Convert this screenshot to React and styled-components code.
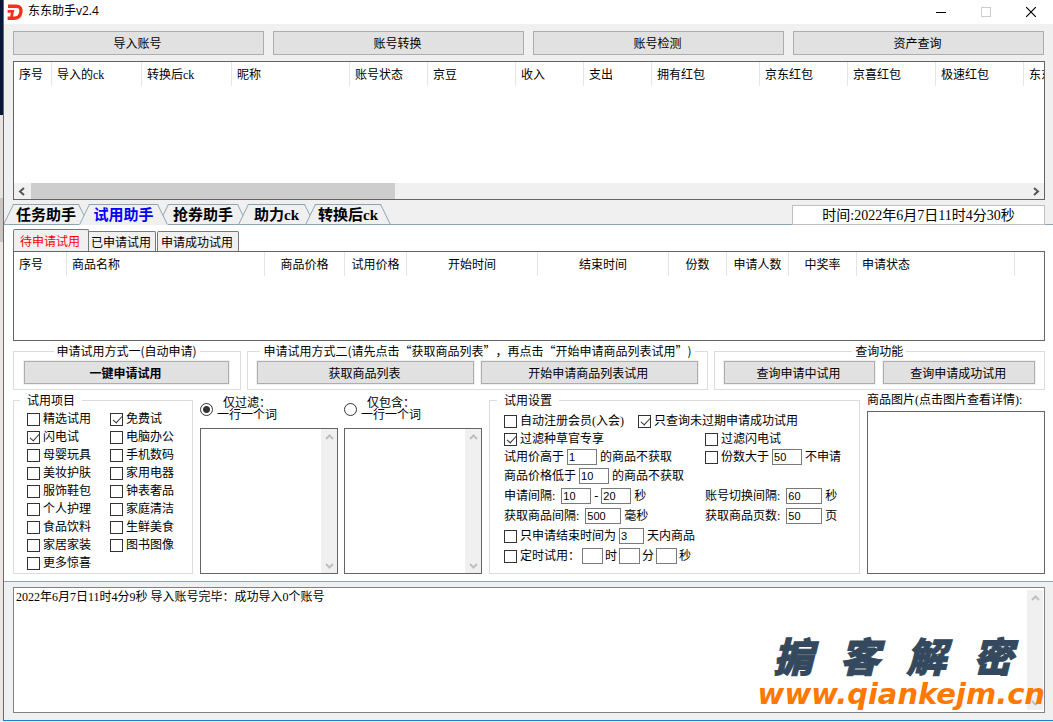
import React, { useState } from 'react';
import styled, { createGlobalStyle } from 'styled-components';

const GlobalStyle = createGlobalStyle`
  * {
    box-sizing: border-box;
  }
  body {
    margin: 0;
    background: #e6e6e6;
    color: #000;
    font-family: "Liberation Serif", "Noto Sans CJK SC", sans-serif;
    font-size: 12px;
    line-height: 14px;
    text-spacing-trim: space-all;
  }
  button, input, textarea {
    font: inherit;
    color: inherit;
    margin: 0;
  }
`;

const Desktop = styled.div`
  height: 100vh;
  min-height: 700px;
  padding: 0 0 1px 3px;
  background: linear-gradient(#04193a 0 115px, #e4e4e4 115px 198px, #c6c6c6 198px 242px, #e8e8e8 242px);
`;

const Window = styled.div`
  height: 100%;
  display: flex;
  flex-direction: column;
  background: #f0f0f0;
  border-left: 1px solid #1a7fd0;
  border-bottom: 1px solid #1a7fd0;
  overflow: hidden;
  white-space: nowrap;
`;

const TitleBar = styled.header`
  display: flex;
  align-items: center;
  height: 24px;
  padding-left: 3px;
  background: #fff;
`;

const Title = styled.h1`
  flex: 1;
  margin: 0 0 2px 4px;
  font-family: "Open Sans", "Noto Sans CJK SC", sans-serif;
  font-size: 12px;
  font-weight: 400;
`;

const WindowButton = styled.button`
  display: flex;
  align-items: center;
  justify-content: center;
  width: 45px;
  height: 22px;
  padding: 0;
  border: none;
  background: none;
`;

const Button = styled.button`
  flex: 1;
  height: ${props => (props.$small ? 23 : 24)}px;
  padding: 2px 2px 0 0;
  border: 1px solid #adadad;
  background: #e1e1e1;
  font-weight: ${props => (props.$bold ? 700 : 400)};
  box-shadow: ${props => (props.$small ? '0 0 0 1px #f0f0f0' : 'none')};
`;

const ButtonBar = styled.div`
  display: flex;
  gap: 9px;
  padding: 7px 9px 6px;
`;

const TableBox = styled.div`
  display: flex;
  flex-direction: column;
  justify-content: space-between;
  height: ${props => props.$height}px;
  margin: 0 8px 0 9px;
  border: 1px solid #646464;
  background: #fff;
  overflow: hidden;
`;

const Table = styled.table`
  table-layout: fixed;
  width: 0;
  border-collapse: separate;
  border-spacing: 0;
`;

const Th = styled.th`
  width: ${props => props.$width}px;
  height: 24px;
  padding: 2px 0 0 ${props => (props.$align === 'center' ? 0 : 5)}px;
  border-right: 1px solid #e5e5e5;
  text-align: ${props => props.$align || 'left'};
  font-weight: 400;
`;

const HScroll = styled.div`
  display: flex;
  align-items: center;
  height: 16px;
  background: #f0f0f0;
`;

const ScrollThumb = styled.div`
  width: 364px;
  height: 16px;
  margin-right: auto;
  background: #cdcdcd;
`;

const ScrollArrow = styled.span`
  display: flex;
  align-items: center;
  justify-content: center;
  width: 17px;
  height: 16px;
`;

const TabBar = styled.div`
  display: flex;
  align-items: flex-end;
  height: 25px;
  padding-left: 4px;
  border-bottom: 1px solid #8ca5b5;
`;

const Tab = styled.button`
  position: relative;
  z-index: ${props => (props.$active ? 2 : 1)};
  width: ${props => props.$width}px;
  height: 21px;
  margin-bottom: -1px;
  padding: 0;
  border: none;
  background: none;
  color: ${props => (props.$active ? '#0000ff' : '#000')};
  font-size: 15px;
  font-weight: 700;
  line-height: 20px;
  &::before,
  &::after {
    content: '';
    position: absolute;
    z-index: -1;
    top: 0;
    bottom: 0;
    width: 60%;
    background: #f0f0f0;
    border-top: 1px solid #8ca5b5;
    border-bottom: 1px solid ${props => (props.$active ? '#f0f0f0' : '#8ca5b5')};
  }
  &::before {
    left: 0;
    border-left: 1px solid #8ca5b5;
    transform: skewX(-26deg);
  }
  &::after {
    right: 0;
    border-right: 1px solid #8ca5b5;
    transform: skewX(26deg);
  }
`;

const Clock = styled.div`
  width: 253px;
  height: 20px;
  margin: 0 8px -1px auto;
  border: 1px solid #c0c0c0;
  background: #fff;
  font-size: 14px;
  line-height: 19px;
  text-align: center;
`;

const Panel = styled.main`
  padding: 4px 8px 7px 9px;
  background: #fff;
  border-bottom: 1px solid #8ca5b5;
`;

const SubTabs = styled.div`
  display: flex;
  align-items: flex-end;
`;

const SubTab = styled.button`
  height: ${props => (props.$active ? 22 : 20)}px;
  width: ${props => props.$width}px;
  margin-right: ${props => (props.$active ? -1 : 1)}px;
  padding: 2px 2px 0 0;
  border: 1px solid #7a7a7a;
  border-bottom: none;
  border-radius: 2px 2px 0 0;
  background: #f0f0f0;
  color: ${props => (props.$active ? '#ff0000' : '#000')};
`;

const SubTable = styled(TableBox)`
  margin: 0;
`;

const Row = styled.div`
  display: flex;
  gap: ${props => props.$gap || 0}px;
`;

const ActionRow = styled.div`
  display: grid;
  grid-template-columns: 228fr 460fr 331fr;
  gap: 7px 6px;
  padding: 3px 0;
`;

const Group = styled.fieldset`
  flex: ${props => props.$flex || 'none'};
  min-width: 0;
  margin: 0;
  padding: ${props => props.$padding || '3px 9px 5px'};
  border: 1px solid #dcdcdc;
`;

const Legend = styled.legend`
  margin: ${props => (props.$left ? '0 0 0 -7px' : '0 auto')};
  padding: 0 ${props => (props.$left ? 7 : 3)}px;
  height: 14px;
  font-family: "Noto Sans CJK SC", sans-serif;
`;

const CheckColumns = styled.div`
  display: grid;
  grid-template-columns: 83px 1fr;
`;

const CheckLabel = styled.label`
  display: flex;
  align-items: center;
  gap: 3px;
  height: 18px;
`;

const CheckBox = styled.input`
  appearance: none;
  position: relative;
  flex: none;
  width: 13px;
  height: 13px;
  border: 1px solid #333;
  background: #fff;
  &:checked::after {
    content: '';
    position: absolute;
    left: 4px;
    top: 0;
    width: 4px;
    height: 8px;
    border: solid #333;
    border-width: 0 1px 1px 0;
    transform: rotate(42deg);
  }
`;

const FilterColumn = styled.div`
  display: flex;
  flex-direction: column;
  width: 138px;
`;

const RadioLabel = styled.label`
  display: flex;
  align-items: center;
  gap: 4px;
  height: 35px;
  padding-bottom: 3px;
  line-height: 12px;
  text-align: center;
`;

const Radio = styled.input`
  appearance: none;
  width: 13px;
  height: 13px;
  border: 1px solid #333;
  border-radius: 50%;
  background: ${props => (props.checked ? 'radial-gradient(#333 0 3px, #fff 4px)' : '#fff')};
`;

const TextFrame = styled.div`
  display: flex;
  flex: 1;
  min-height: 0;
  border: 1px solid ${props => props.$color || '#646464'};
  background: #fff;
`;

const TextArea = styled.textarea`
  flex: 1;
  min-width: 0;
  padding: 2px;
  border: none;
  outline: none;
  resize: none;
  overflow: hidden;
  background: transparent;
`;

const VScroll = styled.div`
  display: flex;
  flex-direction: column;
  justify-content: space-between;
  width: 16px;
  background: #f0f0f0;
`;

const Settings = styled.div`
  display: grid;
  grid-template-columns: 201px 1fr;
`;

const Field = styled.div`
  display: flex;
  align-items: center;
  gap: ${props => props.$gap || 3}px;
  height: ${props => (props.$short ? 18 : 20)}px;
  grid-column: ${props => props.$column || 'auto'};
`;

const FieldName = styled.span`
  padding-right: 3px;
`;

const NumberInput = styled.input`
  width: ${props => props.$width || 30}px;
  height: 16px;
  padding: 0 1px;
  border: 1px solid #7a7a7a;
  background: #fff;
  outline: none;
  font-family: "Liberation Sans", sans-serif;
  font-size: 11px;
`;

const Picture = styled.section`
  display: flex;
  flex-direction: column;
  width: 178px;
`;

const PictureTitle = styled.h2`
  margin: 0 0 4px;
  font-size: 12px;
  font-weight: 400;
  line-height: 14px;
`;

const PictureView = styled.button`
  flex: 1;
  border: 1px solid #646464;
  background: #fff;
`;

const LogArea = styled.section`
  position: relative;
  display: flex;
  flex: 1;
  min-height: 0;
  padding: 5px 8px 7px 9px;
`;

const LogScroll = styled(VScroll)`
  margin: 2px 1px 2px 0;
`;

const Watermark = styled.div`
  position: absolute;
  right: 8px;
  bottom: 10px;
  width: 292px;
  pointer-events: none;
`;

const WatermarkName = styled.div`
  display: flex;
  justify-content: space-between;
  padding: 0 32px 4px 20px;
  color: #34495e;
  font-family: "Noto Sans CJK SC", sans-serif;
  font-size: 40px;
  font-style: italic;
  font-weight: 900;
  line-height: 38px;
  -webkit-text-stroke: 1px #34495e;
`;

const WatermarkUrl = styled.div`
  display: flex;
  justify-content: flex-end;
  color: #ff7800;
  font-family: "DejaVu Sans", sans-serif;
  font-size: 29px;
  font-style: italic;
  font-weight: 700;
  line-height: 32px;
`;

const accountColumns = [
  ['序号', 38], ['导入的ck', 90], ['转换后ck', 90], ['昵称', 118], ['账号状态', 78],
  ['京豆', 88], ['收入', 68], ['支出', 68], ['拥有红包', 108], ['京东红包', 88],
  ['京喜红包', 88], ['极速红包', 88], ['东东红包', 88],
];

const goodsColumns = [
  ['序号', 53], ['商品名称', 198], ['商品价格', 80, 'center'], ['试用价格', 62, 'center'],
  ['开始时间', 131, 'center'], ['结束时间', 131, 'center'], ['份数', 58, 'center'],
  ['申请人数', 62, 'center'], ['中奖率', 68, 'center'], ['申请状态', 158],
];

const tabs = [['任务助手', 76], ['试用助手', 79], ['抢券助手', 80], ['助力ck', 67], ['转换后ck', 76]];
const subTabs = [['待申请试用', 76], ['已申请试用', 68], ['申请成功试用', 82]];

const categories = [
  ['精选试用', '免费试'], ['闪电试', '电脑办公'], ['母婴玩具', '手机数码'],
  ['美妆护肤', '家用电器'], ['服饰鞋包', '钟表奢品'], ['个人护理', '家庭清洁'],
  ['食品饮料', '生鲜美食'], ['家居家装', '图书图像'], ['更多惊喜'],
];

const arrowPaths = {
  left: 'M6 1 L2 4.5 L6 8',
  right: 'M3 1 L7 4.5 L3 8',
  up: 'M1 6 L4.5 2.5 L8 6',
  down: 'M1 3 L4.5 6.5 L8 3',
};

const Arrow = ({ dir, color }) => (
  <ScrollArrow>
    <svg width="9" height="9" viewBox="0 0 9 9">
      <path d={arrowPaths[dir]} fill="none" stroke={color || '#bfbfbf'} strokeWidth="2" />
    </svg>
  </ScrollArrow>
);

const Logo = () => (
  <svg width="17" height="17" viewBox="0 0 17 17" fill="none" stroke="#f5301e" strokeWidth="3.4">
    <path d="M1 2.2 H9 C13 2.2 14.4 4.6 13.9 8 C13.3 12.2 11 14.3 7 14.3 H0.6" />
    <path d="M0.6 7.4 H5.6 L4.4 13.5" strokeWidth="2.8" />
  </svg>
);

const HeaderTable = ({ columns }) => (
  <Table>
    <thead>
      <tr>
        {columns.map(([name, width, align]) => (
          <Th key={name} $width={width} $align={align}>{name}</Th>
        ))}
      </tr>
    </thead>
  </Table>
);

const Check = ({ label, checked }) => (
  <CheckLabel>
    <CheckBox type="checkbox" defaultChecked={checked} />
    {label}
  </CheckLabel>
);

const Filter = ({ label, name, value, onChange }) => (
  <FilterColumn>
    <RadioLabel>
      <Radio type="radio" name="filter" checked={value === name} onChange={() => onChange(name)} />
      <span>{label}<br />一行一个词</span>
    </RadioLabel>
    <TextFrame>
      <TextArea aria-label={label} />
      <VScroll>
        <Arrow dir="up" />
        <Arrow dir="down" />
      </VScroll>
    </TextFrame>
  </FilterColumn>
);

const App = () => {
  const [tab, setTab] = useState('试用助手');
  const [subTab, setSubTab] = useState('待申请试用');
  const [filter, setFilter] = useState('exclude');

  return (
    <>
      <GlobalStyle />
      <Desktop>
        <Window>
          <TitleBar>
            <Logo />
            <Title>东东助手v2.4</Title>
            <WindowButton aria-label="最小化">
              <svg width="10" height="10"><path d="M0 5.5 H10" stroke="#000" /></svg>
            </WindowButton>
            <WindowButton aria-label="最大化" disabled>
              <svg width="10" height="10"><rect x="0.5" y="0.5" width="9" height="9" fill="none" stroke="#ccc" /></svg>
            </WindowButton>
            <WindowButton aria-label="关闭">
              <svg width="10" height="10"><path d="M0 0 L10 10 M10 0 L0 10" stroke="#000" strokeWidth="1.2" /></svg>
            </WindowButton>
          </TitleBar>

          <ButtonBar>
            <Button>导入账号</Button>
            <Button>账号转换</Button>
            <Button>账号检测</Button>
            <Button>资产查询</Button>
          </ButtonBar>

          <TableBox $height={139}>
            <HeaderTable columns={accountColumns} />
            <HScroll>
              <Arrow dir="left" color="#555" />
              <ScrollThumb />
              <Arrow dir="right" color="#555" />
            </HScroll>
          </TableBox>

          <TabBar>
            {tabs.map(([name, width]) => (
              <Tab key={name} $width={width} $active={tab === name} onClick={() => setTab(name)}>{name}</Tab>
            ))}
            <Clock>时间:2022年6月7日11时4分30秒</Clock>
          </TabBar>

          <Panel>
            <SubTabs>
              {subTabs.map(([name, width]) => (
                <SubTab key={name} $width={width} $active={subTab === name} onClick={() => setSubTab(name)}>
                  {name}
                </SubTab>
              ))}
            </SubTabs>
            <SubTable $height={90}>
              <HeaderTable columns={goodsColumns} />
            </SubTable>

            <ActionRow>
              <Group $padding="3px 11px 5px 10px">
                <Legend>申请试用方式一(自动申请)</Legend>
                <Row><Button $small $bold>一键申请试用</Button></Row>
              </Group>
              <Group>
                <Legend>申请试用方式二(请先点击“获取商品列表”，再点击“开始申请商品列表试用”)</Legend>
                <Row $gap={7}>
                  <Button $small>获取商品列表</Button>
                  <Button $small>开始申请商品列表试用</Button>
                </Row>
              </Group>
              <Group>
                <Legend>查询功能</Legend>
                <Row $gap={8}>
                  <Button $small>查询申请中试用</Button>
                  <Button $small>查询申请成功试用</Button>
                </Row>
              </Group>
            </ActionRow>

            <Row $gap={7}>
              <Group $flex="0 0 180px" $padding="3px 13px 1px">
                <Legend $left>试用项目</Legend>
                <CheckColumns>
                  {categories.flat().map(name => (
                    <Check key={name} label={name} checked={name === '免费试' || name === '闪电试'} />
                  ))}
                </CheckColumns>
              </Group>

              <Row $gap={6}>
                <Filter label="仅过滤：" name="exclude" value={filter} onChange={setFilter} />
                <Filter label="仅包含：" name="include" value={filter} onChange={setFilter} />
              </Row>

              <Group $flex="1 1 0" $padding="5px 14px 4px">
                <Legend $left>试用设置</Legend>
                <Settings>
                  <Field $short $column="1 / 3" $gap={14}>
                    <Check label="自动注册会员(入会)" />
                    <Check label="只查询未过期申请成功试用" checked />
                  </Field>
                  <Field $short><Check label="过滤种草官专享" checked /></Field>
                  <Field $short><Check label="过滤闪电试" /></Field>
                  <Field $short>
                    试用价高于 <NumberInput aria-label="试用价高于" defaultValue="1" /> 的商品不获取
                  </Field>
                  <Field $short>
                    <Check label="份数大于" />
                    <NumberInput aria-label="份数大于" defaultValue="50" /> 不申请
                  </Field>
                  <Field $column="1 / 3">
                    商品价格低于 <NumberInput aria-label="商品价格低于" defaultValue="10" /> 的商品不获取
                  </Field>
                  <Field>
                    <FieldName>申请间隔:</FieldName>
                    <NumberInput aria-label="最小申请间隔" defaultValue="10" /> -
                    <NumberInput aria-label="最大申请间隔" defaultValue="20" /> 秒
                  </Field>
                  <Field>
                    <FieldName>账号切换间隔:</FieldName>
                    <NumberInput aria-label="账号切换间隔" $width={36} defaultValue="60" /> 秒
                  </Field>
                  <Field>
                    <FieldName>获取商品间隔:</FieldName>
                    <NumberInput aria-label="获取商品间隔" $width={36} defaultValue="500" /> 毫秒
                  </Field>
                  <Field>
                    <FieldName>获取商品页数:</FieldName>
                    <NumberInput aria-label="获取商品页数" $width={36} defaultValue="50" /> 页
                  </Field>
                  <Field $column="1 / 3">
                    <Check label="只申请结束时间为" />
                    <NumberInput aria-label="结束天数" $width={25} defaultValue="3" /> 天内商品
                  </Field>
                  <Field $column="1 / 3" $gap={2}>
                    <Check label="定时试用：" />
                    <NumberInput aria-label="时" $width={21} /> 时
                    <NumberInput aria-label="分" $width={21} /> 分
                    <NumberInput aria-label="秒" $width={21} /> 秒
                  </Field>
                </Settings>
              </Group>

              <Picture>
                <PictureTitle>商品图片(点击图片查看详情):</PictureTitle>
                <PictureView aria-label="商品图片" />
              </Picture>
            </Row>
          </Panel>

          <LogArea>
            <TextFrame $color="#828282">
              <TextArea aria-label="日志" readOnly value="2022年6月7日11时4分9秒 导入账号完毕：成功导入0个账号" />
              <LogScroll>
                <Arrow dir="up" />
                <Arrow dir="down" />
              </LogScroll>
            </TextFrame>
            <Watermark>
              <WatermarkName>
                <span>掮</span>
                <span>客</span>
                <span>解</span>
                <span>密</span>
              </WatermarkName>
              <WatermarkUrl>www.qiankejm.cn</WatermarkUrl>
            </Watermark>
          </LogArea>
        </Window>
      </Desktop>
    </>
  );
};

export default App;
